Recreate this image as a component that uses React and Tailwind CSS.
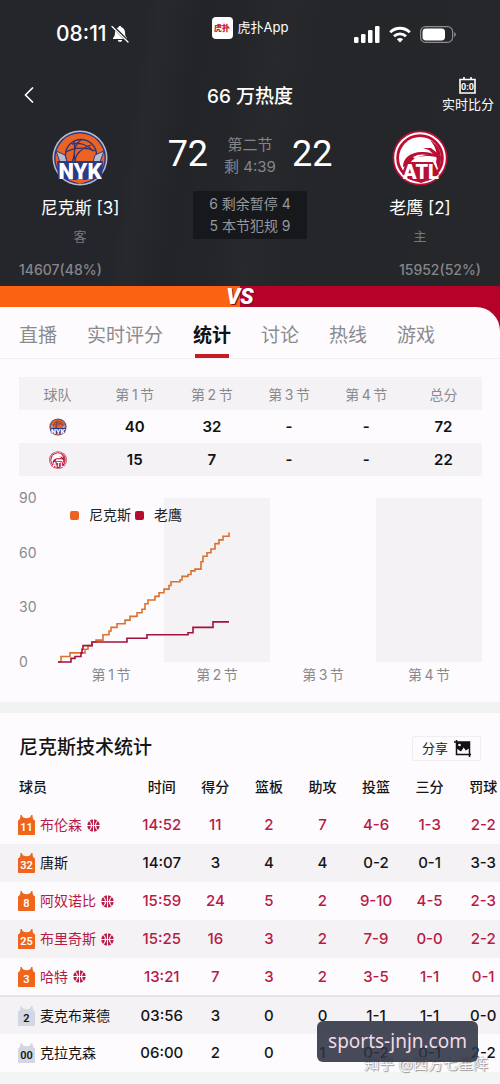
import { useState } from "react";
import clsx from "clsx";

const TABS = ["直播", "实时评分", "统计", "讨论", "热线", "游戏"];

// thin spaces around the digit
const QUARTERS = ["第\u20091\u2009节", "第\u20092\u2009节", "第\u20093\u2009节", "第\u20094\u2009节"];

const PLAYERS = [
    { number: "11", name: "布伦森", onCourt: true, starter: true, stats: ["14:52", "11", "2", "7", "4-6", "1-3", "2-2"] },
    { number: "32", name: "唐斯", onCourt: false, starter: true, stats: ["14:07", "3", "4", "4", "0-2", "0-1", "3-3"] },
    { number: "8", name: "阿奴诺比", onCourt: true, starter: true, stats: ["15:59", "24", "5", "2", "9-10", "4-5", "2-3"] },
    { number: "25", name: "布里奇斯", onCourt: true, starter: true, stats: ["15:25", "16", "3", "2", "7-9", "0-0", "2-2"] },
    { number: "3", name: "哈特", onCourt: true, starter: true, stats: ["13:21", "7", "3", "2", "3-5", "1-1", "0-1"] },
    { number: "2", name: "麦克布莱德", onCourt: false, starter: false, stats: ["03:56", "3", "0", "0", "1-1", "1-1", "0-0"] },
    { number: "00", name: "克拉克森", onCourt: false, starter: false, stats: ["06:00", "2", "0", "1", "0-2", "0-1", "2-2"] },
];

// [position on the time axis, score]
const KNICKS = [
    [0, 0], [3, 3], [12, 5], [27, 7], [30, 9], [34, 11], [38, 12], [45, 15], [51, 17], [53, 19], [59, 21], [67, 23],
    [72, 25], [79, 27], [84, 29], [87, 32], [90, 34], [97, 36], [101, 38], [106, 40], [111, 42], [113, 44], [122, 45],
    [124, 47], [130, 48], [133, 50], [137, 51], [143, 55], [145, 58], [149, 60], [153, 62], [157, 65], [161, 67],
    [165, 69], [171, 71],
];
const HAWKS = [
    [0, 0], [13, 2], [17, 3], [23, 5], [24, 7], [25, 9], [34, 11], [69, 13], [89, 15], [130, 16], [135, 19], [155, 22],
    [171, 22],
];

const toStepPath = (points) =>
    points
        .map(([x, score], i) => {
            const y = (164 - (score * 164) / 90).toFixed(1);
            return i === 0 ? `M${x} ${y}` : `H${x}V${y}`;
        })
        .join("");

const KnicksLogo = ({ className }) => (
    <svg viewBox="0 0 56 56" className={className} role="img" aria-label="尼克斯">
        <circle cx="28" cy="28" r="27.5" fill="#b9bccb" />
        <circle cx="28" cy="28" r="26" fill="#2c3a86" />
        <circle cx="28" cy="28" r="24.5" fill="#ea6325" />
        <g fill="none" stroke="#33326f" strokeWidth="1.3">
            <circle cx="29" cy="25" r="15.5" />
            <path d="M22 11c1 6 1 14-2 22M14 22c9-5 21-5 29-1M20 14c8-2 16 1 21 7M24 34c-3-8 4-15 15-19M29 10c-6 4-8 11-6 22" />
        </g>
        <path d="M4 21l9 4 2 7H8zM52 21l-9 4-2 7h7z" fill="#b9bccb" stroke="#2c3a86" />
        <path d="M5 31h46l-1 18H36l-8 5-8-5H6z" fill="#2c3a86" />
        <path d="M19 50h5l4-2 4 2h5l-9 4z" fill="#ea6325" />
        <text x="28" y="48.5" textAnchor="middle" fontSize="22" fontWeight="900" fontFamily="Roboto, sans-serif" fill="#fff">NYK</text>
    </svg>
);

const HawksLogo = ({ className }) => (
    <svg viewBox="0 0 56 56" className={className} role="img" aria-label="老鹰">
        <circle cx="28" cy="28" r="27.5" fill="#b90f35" />
        <circle cx="28" cy="28" r="24.8" fill="none" stroke="#fff" strokeWidth="2" />
        <circle cx="28" cy="28" r="21" fill="#fff" />
        <path d="M11 37c0-9 7-14 17-15 5 0 9 0 13 2l-4-4-6-2 8 0 5 4c2 1 3 4 3 8l-3-3c-4-1-6-1-10-1-9 0-14 3-17 9z" fill="#b90f35" />
        <path d="M38 10c7 4 11 10 11 18 0 5-1 8-3 11l-2-7c2-8 0-15-6-22z" fill="#b90f35" />
        <path d="M21 27c5-3 10-3 15-2-5 0-9 1-13 4z" fill="#fff" />
        <path d="M10 44l4-12h27l6 12-6 5-12 4-12-4z" fill="#b90f35" />
        <text x="29" y="48.5" textAnchor="middle" fontSize="20" fontWeight="900" fontFamily="Roboto, sans-serif" fill="#fff">ATL</text>
    </svg>
);

const MutedBellIcon = () => (
    <svg viewBox="0 0 18 18" className="size-[18px]">
        <path d="M9 1c.8 0 1.300.5 1.400 1.200C12.800 3 14 5 14 7.500c0 3 .8 4.300 2 5.500v1H2v-1c1.200-1.200 2-2.500 2-5.500C4 5 5.200 3 7.600 2.200 7.700 1.500 8.200 1 9 1zM6.800 15h4.400c-.2 1.200-1.100 2-2.200 2s-2-.8-2.200-2z" fill="#fff" />
        <path d="M1.500 1l15.500 15.500" stroke="#25262a" strokeWidth="3" />
        <path d="M1 1.500l16 15.500" stroke="#fff" strokeWidth="1.300" strokeLinecap="round" />
    </svg>
);

const SignalIcon = () => (
    <svg viewBox="0 0 26 17" className="h-[17px] w-[26px]" fill="#fff">
        <rect x="0" y="11" width="4.500" height="6" rx="1.200" />
        <rect x="7" y="8" width="4.500" height="9" rx="1.200" />
        <rect x="14" y="4" width="4.500" height="13" rx="1.200" />
        <rect x="21" y="0" width="4.500" height="17" rx="1.200" />
    </svg>
);

const WifiIcon = () => (
    <svg viewBox="0 0 22 17" className="h-[17px] w-[22px]" fill="none" stroke="#fff" strokeWidth="2.800">
        <path d="M1.200 6.200c5.500-5.300 14.100-5.300 19.600 0" />
        <path d="M5 10.200c3.400-3.200 8.600-3.200 12 0" />
        <path d="M7.800 13.200c1.900-1.600 4.500-1.600 6.400 0L11 16.500z" fill="#fff" stroke="none" />
    </svg>
);

const BatteryIcon = () => (
    <svg viewBox="0 0 36 17" className="h-[17px] w-9">
        <rect x="0.600" y="0.600" width="32" height="15.800" rx="5" fill="none" stroke="#8b8c90" strokeWidth="1.200" />
        <rect x="2.500" y="2.500" width="22.500" height="12" rx="3.400" fill="#fff" />
        <path d="M34.200 6c1.100.4 1.600 1.400 1.600 2.500s-.5 2.100-1.600 2.500z" fill="#8b8c90" />
    </svg>
);

const ScoreboardIcon = () => (
    <svg viewBox="0 0 17 17" className="size-[17px]">
        <path d="M1 2.500h15V16H1zM5 0v3M12 0v3" fill="none" stroke="#fff" strokeWidth="1.600" />
        <text x="8.500" y="12.500" textAnchor="middle" fontSize="9" fontWeight="700" fontFamily="Roboto, sans-serif" fill="#fff">0:0</text>
    </svg>
);

const CropImageIcon = () => (
    <svg viewBox="0 0 17 17" className="size-[17px]">
        <path d="M0 2h15.500v15M2.500 0v14.500H17" fill="none" stroke="#111" strokeWidth="1.500" />
        <path d="M3 2h12v6.500l-3.300 2-2-3-2.700 4L3 8.800z" fill="#111" />
        <circle cx="5.500" cy="5" r="1.300" fill="#fff" />
    </svg>
);

const BallIcon = () => (
    <svg viewBox="0 0 13 13" className="size-[13px] shrink-0">
        <circle cx="6.500" cy="6.500" r="6.200" fill="#b71a45" />
        <path d="M6.500 0v13M0 6.500h13M2.300 1.500c2.700 3 2.700 7 0 10M10.700 1.500c-2.700 3-2.700 7 0 10" fill="none" stroke="#fdfbfe" strokeWidth="1.100" />
    </svg>
);

const Jersey = ({ number, starter }) => (
    <svg viewBox="0 0 17 20" className="h-5 w-[17px] shrink-0">
        <path d="M2.500 0h1.300c.4 2.200 2 3.200 4.700 3.200S12.800 2.200 13.200 0h1.300c0 3 .5 4.500 2.500 5.500V19c0 .6-.4 1-1 1H1c-.6 0-1-.4-1-1V5.500C2 4.500 2.500 3 2.500 0z" fill={starter ? "#ee651b" : "#d3d7e3"} />
        <text x="8.500" y="15.500" textAnchor="middle" fontSize="11" fontWeight="600" fontFamily="Roboto, sans-serif" fill={starter ? "#fff" : "#15161c"}>{number}</text>
    </svg>
);

const Team = ({ logo, name, rank, side }) => (
    <div className="flex flex-col items-center">
        {logo}
        <div className="mt-2.5 text-[17px] leading-6 text-white">{name} [{rank}]</div>
        <div className="mt-1.5 text-[13px] leading-5 text-[#77787d]">{side}</div>
    </div>
);

const Header = () => (
    <header className="bg-[linear-gradient(98deg,#25262b_0%,#25262b_27%,#28292d_30%,#232428_37%,#242529_45%,#28292c_52%,#25262a_60%,#26272a_100%)] text-white">
        <div className="grid h-[68px] grid-cols-[1fr_auto_1fr]">
            <div className="flex items-center gap-1 pl-14 text-[21px] font-medium">
                08:11 <MutedBellIcon />
            </div>
            <div className="flex h-14 items-center gap-[5px] text-[13px]">
                <span className="flex h-[22px] w-[21px] items-center justify-center rounded bg-white text-[8px] font-black text-[#c8202b]">虎扑</span>
                虎扑App
            </div>
            <div className="flex items-center justify-end gap-[9px] pr-11">
                <SignalIcon />
                <WifiIcon />
                <BatteryIcon />
            </div>
        </div>

        <div className="grid h-[54px] grid-cols-[1fr_auto_1fr] items-center">
            <button type="button" aria-label="返回" className="ml-6 w-6">
                <svg viewBox="0 0 10 16" className="h-4 w-2.5" fill="none" stroke="#fff" strokeWidth="1.600">
                    <path d="M9 0.500L1.500 8L9 15.500" />
                </svg>
            </button>
            <h1 className="pt-1 text-[19px] font-medium">66 万热度</h1>
            <button type="button" className="mr-1.5 flex flex-col items-center justify-self-end text-[13px] leading-5">
                <ScoreboardIcon />
                实时比分
            </button>
        </div>

        <div className="grid grid-cols-[1fr_180px_1fr] pt-2">
            <Team logo={<KnicksLogo className="size-14" />} name="尼克斯" rank={3} side="客" />
            <div className="flex flex-col items-center">
                <div className="flex items-center justify-center gap-4">
                    <span className="font-['Roboto'] text-4xl leading-12">72</span>
                    <div className="pt-1 text-center text-[15px] leading-[22px] text-[#85868b]">
                        第二节<br />剩 4:39
                    </div>
                    <span className="font-['Roboto'] text-4xl leading-12">22</span>
                </div>
                <div className="mt-[13px] w-[114px] rounded-xs bg-[#17181b] py-0.5 text-center text-sm leading-[22px] text-[#96979b]">
                    6 剩余暂停 4<br />5 本节犯规 9
                </div>
            </div>
            <Team logo={<HawksLogo className="size-14" />} name="老鹰" rank={2} side="主" />
        </div>

        <div className="flex h-10 items-center justify-between px-[19px] pt-2 text-sm font-medium text-[#85868b]">
            <span>14607(48%)</span>
            <span>15952(52%)</span>
        </div>

        <div className="relative flex h-[21px]">
            <div className="w-[48%] bg-[#fa6312]" />
            <div className="flex-1 bg-[#b60229]" />
            <span className="absolute left-[48%] -translate-x-1/2 font-['Roboto'] text-[22px] leading-[21px] font-black italic text-white [text-shadow:1px_1px_0_#7c1030]">VS</span>
        </div>
    </header>
);

const Tabs = () => {
    const [active, setActive] = useState("统计");

    return (
        <nav className="flex h-[52px] gap-[30px] border-b border-[#efedf0] pl-[19px]">
            {TABS.map((tab) => (
                <button
                    key={tab}
                    type="button"
                    onClick={() => setActive(tab)}
                    className={clsx(
                        "relative h-full pt-2 text-[19px] whitespace-nowrap",
                        tab === active ? "font-bold text-[#111]" : "text-[#8b8b8e]"
                    )}
                >
                    {tab}
                    {tab === active && <span className="absolute inset-x-0.5 bottom-0 h-1 bg-[#c51d24]" />}
                </button>
            ))}
        </nav>
    );
};

const QuarterTable = () => (
    <table className="w-full table-fixed text-center text-[15px]">
        <thead>
            <tr className="h-[33px] bg-[#f4f2f5] text-sm text-[#8a8a8d]">
                {["球队", ...QUARTERS, "总分"].map((label) => (
                    <th key={label} className="pt-0.5 font-normal">{label}</th>
                ))}
            </tr>
        </thead>
        <tbody className="font-semibold text-[#111]">
            <tr className="h-[33px]">
                <td><KnicksLogo className="mx-auto size-[18px]" /></td>
                {["40", "32", "-", "-", "72"].map((score, i) => <td key={i} className="pt-0.5">{score}</td>)}
            </tr>
            <tr className="h-[33px] bg-[#f4f2f5]">
                <td><HawksLogo className="mx-auto size-[18px]" /></td>
                {["15", "7", "-", "-", "22"].map((score, i) => <td key={i} className="pt-0.5">{score}</td>)}
            </tr>
        </tbody>
    </table>
);

const ScoreChart = () => (
    <div className="mt-3.5 flex text-sm text-[#8a8a8d]">
        <div className="flex h-[180px] w-[39px] shrink-0 flex-col justify-between leading-4">
            <span>90</span>
            <span>60</span>
            <span>30</span>
            <span>0</span>
        </div>
        <div className="flex-1 pt-2">
            <div className="relative h-[164px]">
                <svg viewBox="0 0 424 164" preserveAspectRatio="none" className="absolute inset-0 h-full w-full overflow-visible" fill="none">
                    <path d="M106 0h106v164H106zM318 0h106v164H318z" fill="#f4f2f5" />
                    <path d={toStepPath(KNICKS)} stroke="#d9722f" strokeWidth="1.600" />
                    <path d={toStepPath(HAWKS)} stroke="#a3123c" strokeWidth="1.600" />
                </svg>
                <div className="relative flex items-center pt-[7px] pl-3 text-[#222]">
                    <span className="mr-2.5 size-[9px] rounded-xs bg-[#ea6325]" />尼克斯
                    <span className="mr-2.5 ml-1 size-[9px] rounded-xs bg-[#b60a30]" />老鹰
                </div>
            </div>
            <div className="grid grid-cols-4 text-center leading-[26px]">
                {QUARTERS.map((label) => <span key={label}>{label}</span>)}
            </div>
        </div>
    </div>
);

const PlayerStats = () => (
    <section>
        <div className="flex h-[55px] items-center justify-between px-[19px] pt-4">
            <h2 className="text-[19px] font-medium text-[#151515]">尼克斯技术统计</h2>
            <button type="button" className="flex h-[25px] items-center gap-1.5 rounded-xs border border-[#f0eef1] px-[9px] text-[13px] text-[#222]">
                分享 <CropImageIcon />
            </button>
        </div>
        <div className="overflow-hidden">
            <table className="w-[102%] table-fixed text-center text-[15px] text-[#151515]">
                <thead>
                    <tr className="h-[38px] text-sm">
                        <th className="w-[135px] pl-[19px] text-left font-medium">球员</th>
                        {["时间", "得分", "篮板", "助攻", "投篮", "三分", "罚球"].map((label) => (
                            <th key={label} className="font-medium">{label}</th>
                        ))}
                    </tr>
                </thead>
                <tbody>
                    {PLAYERS.map(({ number, name, onCourt, starter, stats }, i) => (
                        <tr
                            key={name}
                            className={clsx(
                                "h-[38px] even:bg-[#f4f2f5]",
                                onCourt && "text-[#b71a45]",
                                i === 4 && "border-b-2 border-[#e6e4e7]"
                            )}
                        >
                            <td className="pl-[18px]">
                                <div className="flex items-center gap-[5px] text-sm whitespace-nowrap">
                                    <Jersey number={number} starter={starter} />
                                    {name}
                                    {onCourt && <BallIcon />}
                                </div>
                            </td>
                            {stats.map((value, j) => <td key={j} className="pt-px font-medium">{value}</td>)}
                        </tr>
                    ))}
                    <tr className="h-[38px] even:bg-[#f1f5f3]">
                        <td colSpan={8} />
                    </tr>
                </tbody>
            </table>
        </div>
    </section>
);

export default function App() {
    return (
        <div className="relative h-screen overflow-hidden bg-[#fdfbfe] font-['Inter','Noto_Sans_CJK_SC',sans-serif]">
            <Header />
            <div className="bg-[#b60229]">
                <main className="rounded-tr-[24px] bg-[#fdfbfe]">
                    <Tabs />
                    <section className="pt-[18px] pr-[18px] pb-3.5 pl-[19px]">
                        <QuarterTable />
                        <ScoreChart />
                    </section>
                    <div className="h-[11px] bg-[#f0f3f1]" />
                    <PlayerStats />
                </main>
            </div>
            <span className="absolute right-3 bottom-2 text-[15px] leading-6 text-[#fdfbfe] [text-shadow:0_0_1px_#777,1px_1px_1px_#999]">知乎 @西方七星阵</span>
            <a href="#" className="absolute right-[22px] bottom-[22px] rounded-md bg-[#2d3242]/88 px-[11px] font-['Noto_Sans'] text-[19px] leading-[41px] text-[#f3d9e4]">
                sports-jnjn.com
            </a>
        </div>
    );
}
